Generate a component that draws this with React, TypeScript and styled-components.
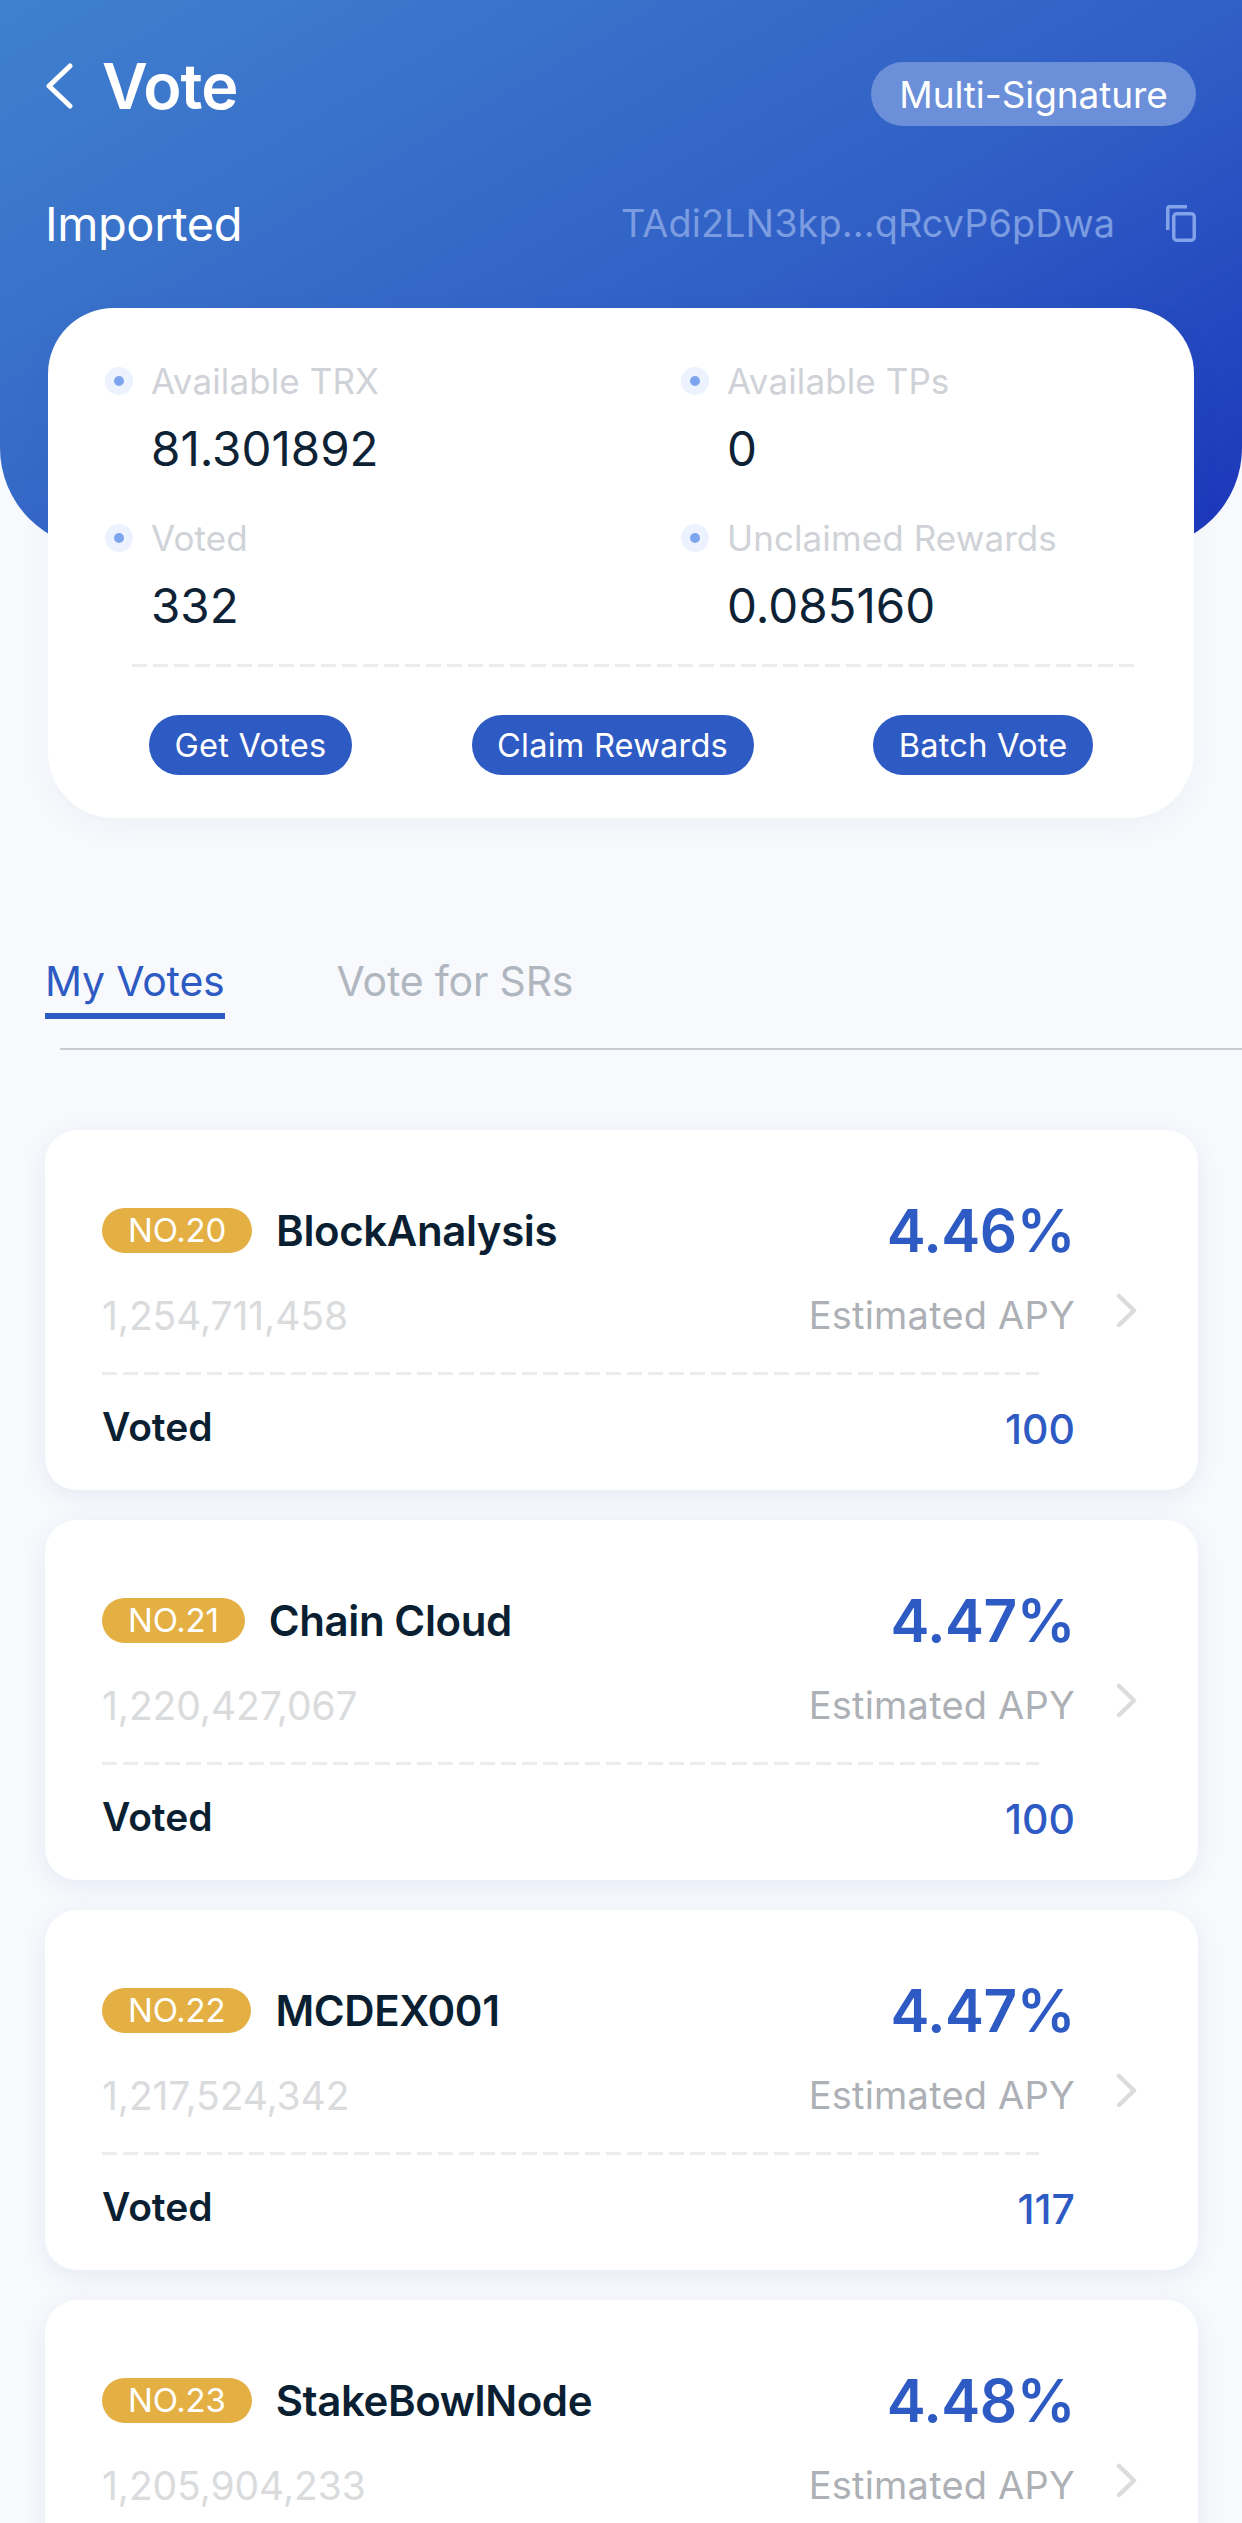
import React from 'react';
import styled, { createGlobalStyle } from 'styled-components';

const GlobalStyle = createGlobalStyle`
    html, body {
        margin: 0;
        padding: 0;
        height: 2523px;
        overflow: hidden;
        background: #f7f9fc;
        font-family: Inter, "Liberation Sans", sans-serif;
    }
`;

const Page = styled.div`
    width: 1242px;
    height: 2523px;
    overflow: hidden;
    background: #f7f9fc;
`;

const Hero = styled.header`
    box-sizing: border-box;
    height: 548px;
    padding: 56px 46px 0 44px;
    border-radius: 0 0 100px 100px;
    background: linear-gradient(150deg, #3f80cf 0%, #3a72ca 25%, #2f5dc5 60%, #1a35ba 100%);
`;

const TopRow = styled.div`
    display: flex;
    align-items: center;
    justify-content: space-between;
    height: 60px;
`;

const TitleGroup = styled.div`
    display: flex;
    align-items: center;
    gap: 28px;
`;

const Title = styled.h1`
    margin: 0;
    font-size: 63px;
    font-weight: 600;
    letter-spacing: -1px;
    color: #fff;
`;

const SigPill = styled.div`
    display: flex;
    align-items: center;
    justify-content: center;
    width: 325px;
    height: 64px;
    margin-top: 16px;
    border-radius: 32px;
    background: #6b8fd9;
    color: #fff;
    font-size: 37px;
    font-weight: 400;
    letter-spacing: -0.1px;
`;

const AccountRow = styled.div`
    display: flex;
    align-items: center;
    height: 60px;
    margin-top: 77px;
    padding-left: 1px;
`;

const AccountName = styled.div`
    flex: 1;
    color: #fff;
    font-size: 47px;
    letter-spacing: -0.4px;
`;

const Address = styled.div`
    color: #7b9ce0;
    font-size: 37.8px;
    letter-spacing: 0.1px;
`;

const CopyButton = styled.div`
    display: flex;
    margin-left: 51px;
`;

const Summary = styled.section`
    box-sizing: border-box;
    width: 1146px;
    height: 510px;
    margin: -240px 0 0 48px;
    padding: 50px 60px 0;
    position: relative;
    border-radius: 66px;
    background: #fff;
    box-shadow: 0 8px 30px rgba(60, 90, 150, 0.05);
`;

const StatGrid = styled.div`
    display: grid;
    grid-template-columns: 576px 1fr;
    row-gap: 38px;
`;

const Stat = styled.div`
    display: grid;
    grid-template-columns: 43px 1fr;
    row-gap: 17px;
    align-items: center;
`;

const Dot = styled.span`
    box-sizing: border-box;
    width: 28px;
    height: 28px;
    margin-left: -3px;
    border: 9.5px solid #ecf3fe;
    border-radius: 50%;
    background: #7ea4ee;
`;

const StatLabel = styled.div`
    color: #cfd2d7;
    font-size: 35px;
    line-height: 46px;
    letter-spacing: 0.1px;
`;

const StatValue = styled.div`
    grid-column: 2;
    color: #0e2236;
    font-size: 47.5px;
    line-height: 56px;
`;

// dashes are 15px on a 21px pitch, wider than what border-style: dashed draws
const DashedLine = styled.div<{ $width: number }>`
    width: ${p => p.$width}px;
    height: 3px;
    background: repeating-linear-gradient(90deg, #ececee 0 15px, transparent 15px 21px);
`;

const SummaryDivider = styled(DashedLine)`
    margin: 30px 0 0 24px;
`;

const ActionRow = styled.div`
    display: flex;
    justify-content: space-between;
    margin: 48px 41px 0 41px;
`;

const ActionButton = styled.button`
    height: 60px;
    padding: 0 25.5px;
    border: 0;
    border-radius: 30px;
    background: #2e5ac3;
    color: #fff;
    font-family: inherit;
    font-size: 32.6px;
    letter-spacing: 0.2px;
`;

const Tabs = styled.nav`
    display: flex;
    gap: 112px;
    margin: 138px 0 0 45px;
`;

const Tab = styled.div<{ $active?: boolean }>`
    padding-bottom: 7px;
    border-bottom: 6px solid ${p => (p.$active ? '#2e5ac3' : 'transparent')};
    color: ${p => (p.$active ? '#2e5ac3' : '#b0b6bf')};
    font-size: 41px;
    line-height: 50px;
    letter-spacing: -0.2px;
`;

const TabRule = styled.div`
    height: 2px;
    margin: 29px 0 0 60px;
    background: #c9ccd2;
`;

const CardList = styled.div`
    display: flex;
    flex-direction: column;
    gap: 30px;
    margin: 80px 44px 0 45px;
`;

const Card = styled.article`
    box-sizing: border-box;
    flex: none;
    height: 360px;
    padding: 69px 123px 0 57px;
    position: relative;
    border-radius: 32px;
    background: #fff;
    box-shadow: 0 6px 24px rgba(60, 90, 170, 0.09);
`;

const NameRow = styled.div`
    display: flex;
    align-items: center;
    height: 62px;
`;

const Rank = styled.span`
    display: flex;
    align-items: center;
    height: 45px;
    margin-right: 24px;
    padding: 0 26px;
    border-radius: 23px;
    background: #e4b044;
    color: #fff;
    font-size: 33px;
    letter-spacing: -0.2px;
`;

const Name = styled.div`
    flex: 1;
    color: #0b1f33;
    font-size: 42px;
    font-weight: 600;
    letter-spacing: -0.4px;
`;

const Apy = styled.div`
    color: #2e5ac3;
    font-size: 58.5px;
    font-weight: 600;
    letter-spacing: -0.5px;
`;

const SubRow = styled.div`
    display: flex;
    align-items: center;
    justify-content: space-between;
    height: 50px;
    margin-top: 29px;
`;

const Power = styled.div`
    color: #dadbdd;
    font-size: 39px;
    letter-spacing: -0.1px;
`;

const ApyLabel = styled.div`
    color: #adb0b5;
    font-size: 38px;
    letter-spacing: 0.2px;
`;

const Chevron = styled.svg`
    position: absolute;
    top: 163px;
    right: 60px;
`;

const CardDivider = styled(DashedLine)`
    margin-top: 32px;
`;

const VotedRow = styled.div`
    display: flex;
    align-items: center;
    justify-content: space-between;
    height: 50px;
    margin-top: 26px;
`;

const VotedLabel = styled.div`
    color: #0b1f33;
    font-size: 39px;
    font-weight: 600;
`;

const VotedValue = styled.div`
    margin-top: 6px;
    color: #2e5ac3;
    font-size: 41px;
    font-weight: 500;
`;

const stats = [
    { label: 'Available TRX', value: '81.301892' },
    { label: 'Available TPs', value: '0' },
    { label: 'Voted', value: '332' },
    { label: 'Unclaimed Rewards', value: '0.085160' },
];

// the last row is cut by the screen edge, so it only goes down to the power line
const votes: { rank: string; name: string; power: string; apy: string; voted?: string }[] = [
    { rank: 'NO.20', name: 'BlockAnalysis', power: '1,254,711,458', apy: '4.46%', voted: '100' },
    { rank: 'NO.21', name: 'Chain Cloud', power: '1,220,427,067', apy: '4.47%', voted: '100' },
    { rank: 'NO.22', name: 'MCDEX001', power: '1,217,524,342', apy: '4.47%', voted: '117' },
    { rank: 'NO.23', name: 'StakeBowlNode', power: '1,205,904,233', apy: '4.48%' },
];

const BackIcon = () => (
    <svg width="30" height="46" viewBox="0 0 30 46" fill="none">
        <path d="M26 3 L5 23 L26 43" stroke="#fff" strokeWidth="5" strokeLinecap="round" strokeLinejoin="round" />
    </svg>
);

const CopyIcon = () => (
    <svg width="30" height="37" viewBox="0 0 30 37" fill="none" stroke="#83a3e8" strokeWidth="3.5">
        <path d="M1.75 25 V3.5 Q1.75 1.75 3.5 1.75 H21" />
        <rect x="7.75" y="8.75" width="20.5" height="26.5" rx="3" />
    </svg>
);

export default function App() {
    return (
        <Page>
            <GlobalStyle />
            <Hero>
                <TopRow>
                    <TitleGroup>
                        <BackIcon />
                        <Title>Vote</Title>
                    </TitleGroup>
                    <SigPill>Multi-Signature</SigPill>
                </TopRow>
                <AccountRow>
                    <AccountName>Imported</AccountName>
                    <Address>TAdi2LN3kp...qRcvP6pDwa</Address>
                    <CopyButton><CopyIcon /></CopyButton>
                </AccountRow>
            </Hero>

            <Summary>
                <StatGrid>
                    {stats.map(s => (
                        <Stat key={s.label}>
                            <Dot />
                            <StatLabel>{s.label}</StatLabel>
                            <StatValue>{s.value}</StatValue>
                        </Stat>
                    ))}
                </StatGrid>
                <SummaryDivider $width={1002} />
                <ActionRow>
                    <ActionButton>Get Votes</ActionButton>
                    <ActionButton>Claim Rewards</ActionButton>
                    <ActionButton>Batch Vote</ActionButton>
                </ActionRow>
            </Summary>

            <Tabs>
                <Tab $active>My Votes</Tab>
                <Tab>Vote for SRs</Tab>
            </Tabs>
            <TabRule />

            <CardList>
                {votes.map(v => (
                    <Card key={v.rank}>
                        <NameRow>
                            <Rank>{v.rank}</Rank>
                            <Name>{v.name}</Name>
                            <Apy>{v.apy}</Apy>
                        </NameRow>
                        <SubRow>
                            <Power>{v.power}</Power>
                            <ApyLabel>Estimated APY</ApyLabel>
                        </SubRow>
                        <Chevron width="22" height="35" viewBox="0 0 22 35" fill="none">
                            <path d="M3 3 L18 17.5 L3 32" stroke="#dcdcde" strokeWidth="4.5" strokeLinecap="round" strokeLinejoin="round" />
                        </Chevron>
                        {v.voted && (
                            <>
                                <CardDivider $width={937} />
                                <VotedRow>
                                    <VotedLabel>Voted</VotedLabel>
                                    <VotedValue>{v.voted}</VotedValue>
                                </VotedRow>
                            </>
                        )}
                    </Card>
                ))}
            </CardList>
        </Page>
    );
}
